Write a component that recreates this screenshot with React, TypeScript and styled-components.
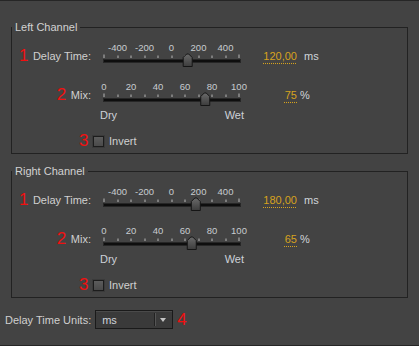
import React from "react";
import styled, { createGlobalStyle } from "styled-components";

const GlobalStyle = createGlobalStyle`
    body {
        margin: 0;
        background: #434343;
        font-family: "Liberation Sans", Arial, sans-serif;
        font-size: 11px;
        color: #d0d0d0;
    }
`;

const TRACK_W = 138;
const TICK_STEP = 13.5;

type Channel = {
    title: string;
    delay: number;
    mix: number;
};

const channels: Channel[] = [
    { title: "Left Channel", delay: 120, mix: 75 },
    { title: "Right Channel", delay: 180, mix: 65 },
];

const delayLabels = ["-400", "-200", "0", "200", "400"];
const mixLabels = ["0", "20", "40", "60", "80", "100"];

const SliderTrack = ({ fraction }: { fraction: number }) => {
    const cx = 1 + fraction * TICK_STEP * 10;
    const ticks = Array.from({ length: 11 }, (_, i) => 1 + i * TICK_STEP);

    return (
        <TrackSvg width={TRACK_W} height={14} viewBox={`0 0 ${TRACK_W} 14`}>
            <defs>
                <linearGradient id="thumbFill" x1="0" y1="0" x2="0" y2="1">
                    <stop offset="0" stopColor="#6a6a6a" />
                    <stop offset="1" stopColor="#3c3c3c" />
                </linearGradient>
            </defs>
            {ticks.map((x, i) => (
                <rect
                    key={i}
                    x={Math.round(x) - 0.5}
                    y={i === 0 || i === 10 ? 0.5 : 1.5}
                    width={1}
                    height={i === 0 || i === 10 ? 3.5 : 2.5}
                    fill="#b8b8b8"
                />
            ))}
            <rect x={0.5} y={5.5} width={TRACK_W - 1} height={3} fill="#0e0e0e" stroke="#262626" />
            <polygon
                points={`${cx - 4.5},12.5 ${cx - 4.5},3.5 ${cx - 1},0 ${cx + 1},0 ${cx + 4.5},3.5 ${cx + 4.5},12.5`}
                fill="url(#thumbFill)"
                stroke="#151515"
                strokeWidth={1}
            />
        </TrackSvg>
    );
};

const ChannelBox = ({ channel }: { channel: Channel }) => (
    <GroupBox>
        <Legend>{channel.title}</Legend>

        <SliderRow>
            <LabelCell>
                <Annot>1</Annot>
                <span>Delay Time:</span>
            </LabelCell>
            <SliderBlock>
                <Scale $cols={5} $offset={1}>
                    {delayLabels.map((l) => (
                        <span key={l}>{l}</span>
                    ))}
                </Scale>
                <SliderTrack fraction={(channel.delay + 500) / 1000} />
            </SliderBlock>
            <ValueCell>
                <Value>{channel.delay.toFixed(2).replace(".", ",")}</Value>
                <Unit $gap={7}>ms</Unit>
            </ValueCell>
        </SliderRow>

        <SliderRow $top={13}>
            <LabelCell>
                <Annot>2</Annot>
                <span>Mix:</span>
            </LabelCell>
            <SliderBlock>
                <Scale $cols={6} $offset={-12.5}>
                    {mixLabels.map((l) => (
                        <span key={l}>{l}</span>
                    ))}
                </Scale>
                <SliderTrack fraction={channel.mix / 100} />
            </SliderBlock>
            <ValueCell>
                <Value>{channel.mix}</Value>
                <Unit $gap={3}>%</Unit>
            </ValueCell>
        </SliderRow>

        <DryWet>
            <span>Dry</span>
            <span>Wet</span>
        </DryWet>

        <InvertRow>
            <Annot>3</Annot>
            <CheckBox />
            <span>Invert</span>
        </InvertRow>
    </GroupBox>
);

const App = () => (
    <Window>
        <GlobalStyle />
        {channels.map((c) => (
            <ChannelBox key={c.title} channel={c} />
        ))}
        <UnitsRow>
            <span>Delay Time Units:</span>
            <Select>
                <SelectText>ms</SelectText>
                <SelectArrow />
            </Select>
            <Annot>4</Annot>
        </UnitsRow>
    </Window>
);

export default App;

const Window = styled.div`
    width: 419px;
    height: 346px;
    box-sizing: border-box;
    padding-top: 19px;
    border-top: 1px solid #262626;
    border-bottom: 1px solid #262626;
    background: #434343;
`;

const GroupBox = styled.fieldset`
    margin: 0 11px;
    padding: 8px 0 5px;
    border: 1px solid #222222;
    min-inline-size: 0;

    & + & {
        margin-top: 10px;
    }
`;

const Legend = styled.legend`
    padding: 0 3px;
    margin-left: 0;
    font-size: 11px;
    line-height: 14px;
    color: #d2d2d2;
`;

const SliderRow = styled.div<{ $top?: number }>`
    display: flex;
    align-items: flex-start;
    margin-top: ${(p) => p.$top ?? 0}px;
`;

const LabelCell = styled.div`
    width: 79px;
    margin-top: 7px;
    display: flex;
    justify-content: flex-end;
    align-items: center;
    gap: 6px;
    line-height: 14px;
    white-space: nowrap;
`;

const Annot = styled.span`
    display: inline-block;
    width: 8px;
    text-align: center;
    font-family: "Liberation Sans Narrow", "Liberation Sans", Arial, sans-serif;
    font-size: 17px;
    line-height: 14px;
    color: #f01010;
`;

const SliderBlock = styled.div`
    margin-left: 12px;
    width: ${TRACK_W}px;
`;

const Scale = styled.div<{ $cols: number; $offset: number }>`
    display: grid;
    grid-template-columns: repeat(${(p) => p.$cols}, 27px);
    margin-left: ${(p) => p.$offset}px;
    height: 12px;
    font-size: 9.5px;
    line-height: 12px;
    color: #c8ccd0;

    span {
        text-align: center;
    }
`;

const TrackSvg = styled.svg`
    display: block;
    overflow: visible;
`;

const ValueCell = styled.div`
    margin-top: 7px;
    display: flex;
    align-items: center;
    line-height: 14px;
`;

const Value = styled.span`
    width: 56px;
    display: flex;
    justify-content: flex-end;
    color: #d6a21e;
    text-decoration: underline dotted #d6a21e;
    text-underline-offset: 3px;
`;

const Unit = styled.span<{ $gap: number }>`
    margin-left: ${(p) => p.$gap}px;
    color: #d0d4da;
`;

const DryWet = styled.div`
    display: flex;
    justify-content: space-between;
    width: 144px;
    margin: 1px 0 0 88px;
    line-height: 14px;
    color: #cdd1d8;
`;

const InvertRow = styled.div`
    display: flex;
    align-items: center;
    margin-top: 12px;
    padding-left: 67px;
    line-height: 14px;

    ${Annot} {
        margin-right: 6px;
    }
`;

const CheckBox = styled.span`
    width: 9px;
    height: 9px;
    margin-right: 5px;
    border: 1px solid #1c1c1c;
    background: linear-gradient(#5c5c5c, #4a4a4a);
    box-shadow: 0 0 0 1px #3a3a3a;
`;

const UnitsRow = styled.div`
    display: flex;
    align-items: center;
    margin-top: 12px;
    padding-left: 5px;
    line-height: 14px;
`;

const Select = styled.div`
    display: flex;
    align-items: center;
    width: 78px;
    height: 19px;
    box-sizing: border-box;
    margin: 0 4px;
    border: 1px solid #1a1a1a;
    background-color: #3a3a3a;
    background-image: radial-gradient(#424242 0.6px, transparent 0.7px);
    background-size: 2px 2px;
    box-shadow: inset 0 1px 0 #4a4a4a;
`;

const SelectText = styled.span`
    flex: 1;
    padding-left: 6px;
    color: #d0d4da;
`;

const SelectArrow = styled.span`
    position: relative;
    width: 17px;
    height: 13px;
    border-left: 1px solid #222222;
    box-shadow: inset 1px 0 0 #555555;

    &::after {
        content: "";
        position: absolute;
        left: 5px;
        top: 5px;
        border-left: 3.5px solid transparent;
        border-right: 3.5px solid transparent;
        border-top: 4px solid #c4c4c4;
    }
`;
